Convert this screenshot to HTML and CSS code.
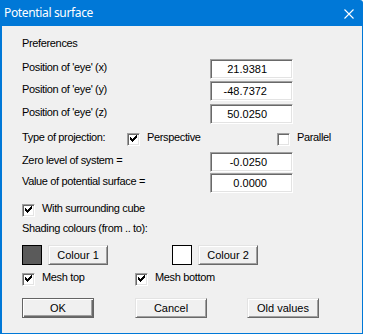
FILE: index.html
```html
<!DOCTYPE html>
<html>
<head>
<meta charset="utf-8">
<link rel="stylesheet" href="styles.css">
</head>
<body>
<div class="window">
  <div class="titlebar">
    <span class="title">Potential surface</span>
    <svg class="close" width="10" height="10" viewBox="0 0 10 10"><path d="M0.5 0.5L9.5 9.5M9.5 0.5L0.5 9.5" stroke="#fff" stroke-width="1.1" fill="none"/></svg>
  </div>
  <div class="body">
    <div class="heading">Preferences</div>

    <div class="field r-x"><span class="label">Position of 'eye' (x)</span><span class="edit">21.9381</span></div>
    <div class="field r-y"><span class="label">Position of 'eye' (y)</span><span class="edit">-48.7372</span></div>
    <div class="field r-z"><span class="label">Position of 'eye' (z)</span><span class="edit">50.0250</span></div>

    <div class="proj">
      <span class="label">Type of projection:</span>
      <span class="check"><span class="box"><svg width="9" height="9" viewBox="0 0 9 9"><path d="M1 2h1v3h-1zM2 3h1v3h-1zM3 4h1v3h-1zM4 3h1v3h-1zM5 2h1v3h-1zM6 1h1v3h-1zM7 0h1v3h-1z" fill="#000"/></svg></span><span class="ctext">Perspective</span></span>
      <span class="check"><span class="box"></span><span class="ctext">Parallel</span></span>
    </div>

    <div class="field r-zero"><span class="label">Zero level of system =</span><span class="edit">-0.0250</span></div>
    <div class="field r-val"><span class="label">Value of potential surface =</span><span class="edit">0.0000</span></div>

    <div class="cube">
      <span class="check"><span class="box"><svg width="9" height="9" viewBox="0 0 9 9"><path d="M1 2h1v3h-1zM2 3h1v3h-1zM3 4h1v3h-1zM4 3h1v3h-1zM5 2h1v3h-1zM6 1h1v3h-1zM7 0h1v3h-1z" fill="#000"/></svg></span><span class="ctext">With surrounding cube</span></span>
    </div>

    <div class="heading2">Shading colours (from .. to):</div>

    <div class="colours">
      <div class="colgroup"><span class="swatch dark"></span><span class="btn colbtn">Colour 1</span></div>
      <div class="colgroup"><span class="swatch light"></span><span class="btn colbtn">Colour 2</span></div>
    </div>

    <div class="mesh">
      <span class="check"><span class="box"><svg width="9" height="9" viewBox="0 0 9 9"><path d="M1 2h1v3h-1zM2 3h1v3h-1zM3 4h1v3h-1zM4 3h1v3h-1zM5 2h1v3h-1zM6 1h1v3h-1zM7 0h1v3h-1z" fill="#000"/></svg></span><span class="ctext">Mesh top</span></span>
      <span class="check"><span class="box"><svg width="9" height="9" viewBox="0 0 9 9"><path d="M1 2h1v3h-1zM2 3h1v3h-1zM3 4h1v3h-1zM4 3h1v3h-1zM5 2h1v3h-1zM6 1h1v3h-1zM7 0h1v3h-1z" fill="#000"/></svg></span><span class="ctext">Mesh bottom</span></span>
    </div>

    <div class="actions">
      <span class="btn act default">OK</span>
      <span class="btn act">Cancel</span>
      <span class="btn act">Old values</span>
    </div>
  </div>
</div>
</body>
</html>
```

FILE: styles.css
```css
html, body {
  margin: 0;
  padding: 0;
  background: #ffffff;
}
.window {
  width: 363px;
  height: 334px;
  display: flex;
  flex-direction: column;
}
.titlebar {
  height: 26px;
  background: #0078d7;
  border-top-right-radius: 3px;
  display: flex;
  align-items: center;
  justify-content: space-between;
  padding: 0 9px 0 4px;
  box-sizing: border-box;
  flex: none;
}
.title {
  font-family: "Noto Sans", sans-serif;
  font-size: 12px;
  line-height: 26px;
  color: #ffffff;
  letter-spacing: -0.35px;
}
.close {
  display: block;
  margin-top: 1px;
}
.body {
  flex: 1;
  background: #f0f0f0;
  border-left: 2px solid #0078d7;
  border-right: 1px solid #0078d7;
  border-bottom: 1px solid #0078d7;
  padding-left: 20px;
  display: flex;
  flex-direction: column;
  font-family: "Liberation Sans", Arial, sans-serif;
  font-size: 11px;
  line-height: 13px;
  letter-spacing: -0.35px;
  color: #000;
}
.heading {
  margin-top: 11px;
  height: 13px;
}
.field {
  display: grid;
  grid-template-columns: 188px 83px;
  align-items: start;
  height: 20px;
}
.field .label {
  margin-top: 2px;
}
.r-x { margin-top: 9px; }
.r-y { margin-top: 2px; }
.r-z { margin-top: 3px; }
.r-zero { margin-top: 6px; }
.r-val { margin-top: 1px; }
.edit {
  display: block;
  height: 20px;
  box-sizing: border-box;
  background: #ffffff;
  border-style: solid;
  border-width: 1px;
  border-color: #a0a0a0 #ffffff #ffffff #a0a0a0;
  box-shadow: inset 1px 1px 0 #696969, inset -1px -1px 0 #e3e3e3;
  text-align: right;
  padding: 2px 25px 0 0;
  line-height: 14px;
  letter-spacing: 0;
}
.check {
  display: flex;
  align-items: flex-start;
  gap: 7px;
}
.ctext {
  margin-top: 1px;
}
.box {
  width: 13px;
  height: 13px;
  box-sizing: border-box;
  margin-top: 3px;
  background: #ffffff;
  border-style: solid;
  border-width: 1px;
  border-color: #a0a0a0 #ffffff #ffffff #a0a0a0;
  box-shadow: inset 1px 1px 0 #696969, inset -1px -1px 0 #e3e3e3;
  display: flex;
  align-items: center;
  justify-content: center;
  flex: none;
}
.box svg {
  display: block;
}
.proj {
  margin-top: 6px;
  height: 16px;
  display: grid;
  grid-template-columns: 105px 150px auto;
  align-items: start;
}
.proj .label {
  margin-top: 1px;
}
.cube {
  margin-top: 8px;
  height: 16px;
  display: flex;
}
.heading2 {
  margin-top: 5px;
  height: 13px;
}
.colours {
  margin-top: 10px;
  height: 20px;
  display: grid;
  grid-template-columns: 150px auto;
}
.colgroup {
  display: flex;
  gap: 6px;
}
.swatch {
  width: 20px;
  height: 20px;
  box-sizing: border-box;
  border: 1px solid #000000;
}
.swatch.dark { background: #5a5a5a; }
.swatch.light { background: #ffffff; }
.btn {
  box-sizing: border-box;
  height: 20px;
  display: flex;
  align-items: center;
  justify-content: center;
  background: #f0f0f0;
  border-style: solid;
  border-width: 1px;
  border-color: #e3e3e3 #696969 #696969 #e3e3e3;
  box-shadow: inset 1px 1px 0 #ffffff, inset -1px -1px 0 #a0a0a0;
  padding-top: 1px;
  letter-spacing: 0;
}
.colbtn {
  width: 60px;
}
.mesh {
  margin-top: 5px;
  height: 16px;
  display: grid;
  grid-template-columns: 113px auto;
}
.actions {
  margin-top: 12px;
  height: 20px;
  display: grid;
  grid-template-columns: 113px 112px 72px;
}
.act {
  width: 72px;
}
.act.default {
  border-color: #646464;
  box-shadow: inset 1px 1px 0 #ffffff, inset -1px -1px 0 #696969, inset -2px -2px 0 #a0a0a0;
}
```
